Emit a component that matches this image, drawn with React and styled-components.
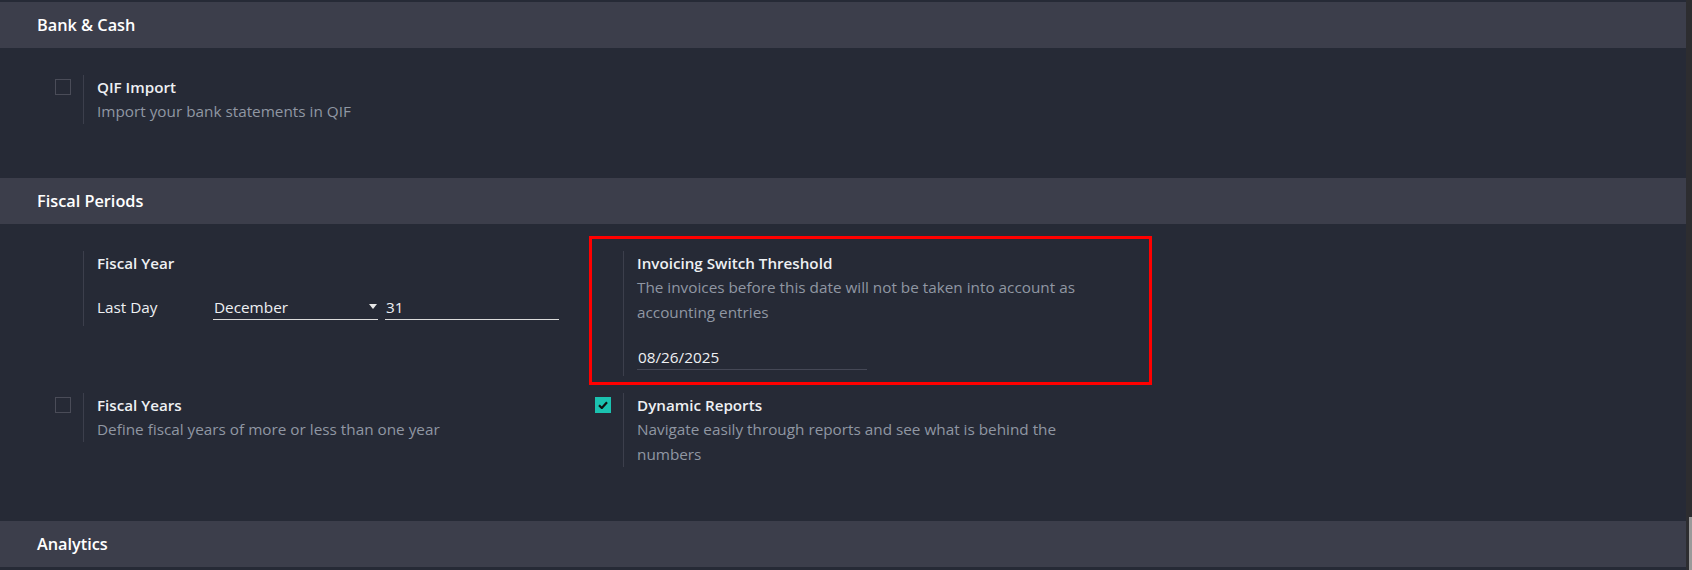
import React from "react";
import styled, { createGlobalStyle, css } from "styled-components";

const GlobalStyle = createGlobalStyle`
  html, body {
    margin: 0;
    padding: 0;
    background: #262a36;
  }
  body {
    font-family: "Open Sans", "Noto Sans", sans-serif;
    color: #e4e6eb;
  }
`;

const Page = styled.div`
  display: flex;
  height: 570px;
  overflow: hidden;
  background: #262a36;
`;

const Main = styled.main`
  flex: 1;
  padding-top: 2px;
`;

const ScrollTrack = styled.div`
  width: 6px;
  background: #2d2d30;
  display: flex;
  flex-direction: column;
  justify-content: flex-end;
`;

const ScrollThumb = styled.div`
  width: 3px;
  height: 53px;
  margin-left: 3px;
  background: #9a9a9a;
`;

const SectionTitle = styled.h2`
  margin: 0;
  height: 46px;
  display: flex;
  align-items: center;
  padding-left: 37px;
  background: #3c3e4b;
  font-size: 16.3px;
  font-weight: 600;
  color: #ffffff;
`;

const SettingsGrid = styled.div`
  display: grid;
  grid-template-columns: 540px 540px;
  row-gap: 17px;
  align-items: start;
  padding: 27px 0 54px 49px;
`;

const SettingBox = styled.div`
  position: relative;
  display: flex;
  ${(p) =>
    p.$highlight &&
    css`
      &::after {
        content: "";
        position: absolute;
        top: -15px;
        bottom: -9px;
        left: 0;
        right: -23px;
        border: 3px solid #ff0000;
        pointer-events: none;
      }
    `}
`;

const LeftPane = styled.div`
  width: 34px;
  flex: none;
  box-sizing: border-box;
  padding: 4px 0 0 6px;
`;

const Checkbox = styled.span`
  display: flex;
  align-items: center;
  justify-content: center;
  width: 16px;
  height: 16px;
  box-sizing: border-box;
  border: 1px solid ${(p) => (p.$checked ? "#1bc2b0" : "#4a4c58")};
  background: ${(p) => (p.$checked ? "#1bc2b0" : "transparent")};
`;

const RightPane = styled.div`
  border-left: 1px solid #3c3f4c;
  padding-left: 13px;
`;

const Title = styled.div`
  font-size: 15.2px;
  font-weight: 600;
  line-height: 24px;
  color: #eef0f3;
`;

const Desc = styled.div`
  font-size: 15.3px;
  line-height: 25px;
  color: #9097a3;
  max-width: 462px;
`;

const FieldRow = styled.div`
  display: flex;
  align-items: flex-end;
  margin: 16px 0 6px;
  font-size: 15.3px;
  color: #eef0f3;
`;

const Label = styled.div`
  width: 116px;
  line-height: 22px;
  padding-bottom: 2px;
`;

const Field = styled.div`
  display: flex;
  align-items: flex-end;
  justify-content: space-between;
  width: ${(p) => p.$width}px;
  height: 29px;
  margin-right: ${(p) => p.$gap || 0}px;
  padding: 0 0 1px 1px;
  line-height: 22px;
  box-sizing: border-box;
  border-bottom: 1px solid ${(p) => (p.$muted ? "#454856" : "#dcdcdc")};
`;

const CheckMark = () => (
  <svg width="10" height="8" viewBox="0 0 10 8">
    <path d="M1 4.2 L3.8 7 L9 1.2" fill="none" stroke="#111" strokeWidth="2.2" />
  </svg>
);

const Caret = () => (
  <svg width="8" height="5" viewBox="0 0 8 5" style={{ margin: "0 1px 9px 0" }}>
    <path d="M0 0 H8 L4 5 Z" fill="#e8e8e8" />
  </svg>
);

const Setting = ({ checkbox, checked, highlight, title, desc, children }) => (
  <SettingBox $highlight={highlight}>
    <LeftPane>{checkbox && <Checkbox $checked={checked}>{checked && <CheckMark />}</Checkbox>}</LeftPane>
    <RightPane>
      <Title>{title}</Title>
      {desc && <Desc>{desc}</Desc>}
      {children}
    </RightPane>
  </SettingBox>
);

const App = () => (
  <Page>
    <GlobalStyle />
    <Main>
      <SectionTitle>Bank &amp; Cash</SectionTitle>
      <SettingsGrid>
        <Setting checkbox title="QIF Import" desc="Import your bank statements in QIF" />
      </SettingsGrid>

      <SectionTitle>Fiscal Periods</SectionTitle>
      <SettingsGrid>
        <Setting title="Fiscal Year">
          <FieldRow>
            <Label>Last Day</Label>
            <Field $width={165} $gap={7}>
              <span>December</span>
              <Caret />
            </Field>
            <Field $width={174}>31</Field>
          </FieldRow>
        </Setting>
        <Setting
          highlight
          title="Invoicing Switch Threshold"
          desc="The invoices before this date will not be taken into account as accounting entries"
        >
          <FieldRow>
            <Field $width={230} $muted>
              08/26/2025
            </Field>
          </FieldRow>
        </Setting>
        <Setting checkbox title="Fiscal Years" desc="Define fiscal years of more or less than one year" />
        <Setting
          checkbox
          checked
          title="Dynamic Reports"
          desc="Navigate easily through reports and see what is behind the numbers"
        />
      </SettingsGrid>

      <SectionTitle>Analytics</SectionTitle>
    </Main>
    <ScrollTrack>
      <ScrollThumb />
    </ScrollTrack>
  </Page>
);

export default App;
